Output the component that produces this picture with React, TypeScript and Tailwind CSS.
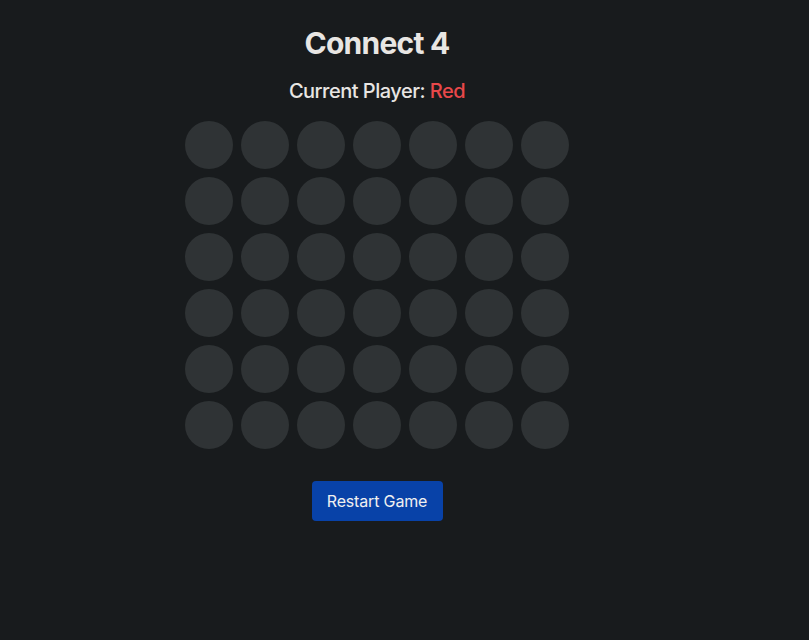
import React, { useState } from "react";

export default function App() {
  const [board] = useState<(string | null)[][]>(
    Array.from({ length: 6 }, () => Array(7).fill(null))
  );
  return (
    <div
      className="min-h-[640px] w-full bg-[#181b1d] text-[#e8e6e3]"
      style={{ fontFamily: "Inter, 'Noto Sans', sans-serif" }}
    >
      <div className="w-[754px] flex flex-col items-center pt-[25px]">
        <h1 className="text-[30px] leading-[36px] font-bold tracking-[-0.025em]">Connect 4</h1>
        <div className="mt-[16px] text-[20px] leading-[28px] font-medium tracking-[-0.025em]">
          Current Player: <span className="text-[#e8484a]">Red</span>
        </div>
        <div className="mt-[16px] grid grid-cols-7 gap-2">
          {board.flat().map((c, i) => (
            <div key={i} className="w-12 h-12 rounded-full bg-[#2f3335]" />
          ))}
        </div>
        <button className="mt-[32px] h-10 w-[131px] rounded bg-[#0842a8] text-[#f0f0f0] text-[16px] font-normal tracking-[-0.01em]">
          Restart Game
        </button>
      </div>
    </div>
  );
}
